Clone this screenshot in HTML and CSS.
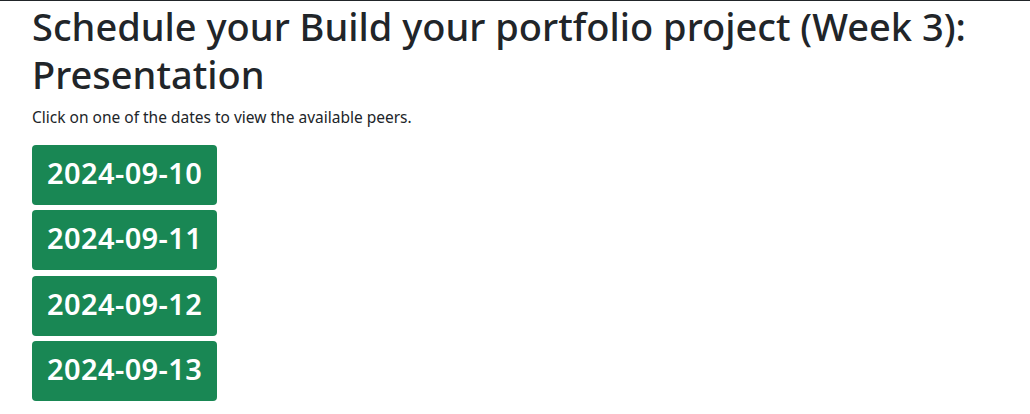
FILE: index.html
```html
<!DOCTYPE html>
<html lang="en">
<head>
<meta charset="utf-8">
<title>Schedule</title>
<link rel="stylesheet" href="styles.css">
</head>
<body>
<div class="page">
  <h1 class="title">Schedule your Build your portfolio project (Week 3): Presentation</h1>
  <p class="hint">Click on one of the dates to view the available peers.</p>
  <div class="dates">
    <button class="date-btn">2024-09-10</button>
    <button class="date-btn">2024-09-11</button>
    <button class="date-btn">2024-09-12</button>
    <button class="date-btn">2024-09-13</button>
  </div>
</div>
</body>
</html>
```
FILE: styles.css
```css
html, body {
  margin: 0;
  padding: 0;
  background: #fff;
}
body {
  border-top: 1px solid #212529;
  font-family: "Noto Sans", "Open Sans", sans-serif;
  color: #212529;
}
.page {
  padding: 0 32px;
}
.title {
  margin: 0;
  padding-top: 1px;
  font-size: 38px;
  font-weight: 500;
  line-height: 48px;
}
.hint {
  margin: 8px 0 0;
  font-size: 15.5px;
  line-height: 22px;
}
.dates {
  display: flex;
  flex-direction: column;
  align-items: flex-start;
  gap: 5.3px;
  margin-top: 17px;
}
.date-btn {
  box-sizing: border-box;
  display: block;
  background: #198754;
  color: #fff;
  border: none;
  border-radius: 4px;
  padding: 8px 15px 12px;
  height: 60px;
  line-height: 40px;
  font-family: inherit;
  font-size: 29px;
  font-weight: 600;
  letter-spacing: 0.4px;
}
```
